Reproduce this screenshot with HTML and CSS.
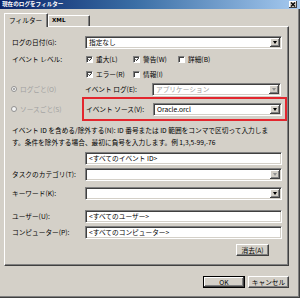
FILE: index.html
```html
<!DOCTYPE html>
<html lang="ja">
<head>
<meta charset="utf-8">
<link rel="stylesheet" href="styles.css">
</head>
<body>
<div class="win">
  <div class="titlebar">
    <span class="title">現在のログをフィルター</span>
    <span class="close"><svg width="6" height="5" viewBox="0 0 6 5"><path d="M1 0.5 L5 4.5 M5 0.5 L1 4.5" stroke="#000" stroke-width="1.2"/></svg></span>
  </div>
  <div class="tabs">
    <div class="tab active">フィルター</div>
    <div class="tab">XML</div>
  </div>
  <div class="panel">
    <div class="row r-date">
      <span class="lbl">ログの日付(G):</span>
      <div class="combo w197"><span class="val">指定なし</span><span class="arr"><i class="tri"></i></span></div>
    </div>
    <div class="row r-level">
      <span class="lbl lvl-lbl">イベント レベル:</span>
      <div class="checks">
        <span class="chk"><span class="box on"><svg width="5" height="5" viewBox="0 0 5 5"><path d="M0.5 2.3 L1.9 3.8 L4.6 0.8" stroke="#000" stroke-width="1.1" fill="none"/></svg></span>重大(L)</span>
        <span class="chk"><span class="box on"><svg width="5" height="5" viewBox="0 0 5 5"><path d="M0.5 2.3 L1.9 3.8 L4.6 0.8" stroke="#000" stroke-width="1.1" fill="none"/></svg></span>警告(W)</span>
        <span class="chk"><span class="box"></span>詳細(B)</span>
        <span class="chk"><span class="box on"><svg width="5" height="5" viewBox="0 0 5 5"><path d="M0.5 2.3 L1.9 3.8 L4.6 0.8" stroke="#000" stroke-width="1.1" fill="none"/></svg></span>エラー(R)</span>
        <span class="chk"><span class="box"></span>情報(I)</span>
      </div>
    </div>
    <div class="row r-log">
      <span class="radio-col"><span class="radio on"></span><span class="dis">ログごと(O)</span></span>
      <span class="lbl2">イベント ログ(E):</span>
      <div class="combo w129"><span class="val dis">アプリケーション</span><span class="arr"><i class="tri dim"></i></span></div>
    </div>
    <div class="row r-src">
      <span class="radio-col short"><span class="radio"></span><span class="dis">ソースごと(S)</span></span>
      <div class="hilite">
        <span class="lbl2">イベント ソース(V):</span>
        <div class="combo w129"><span class="val">Oracle.orcl</span><span class="arr"><i class="tri"></i></span></div>
      </div>
    </div>
    <p class="note">イベント ID を含める/除外する(N): ID 番号または ID 範囲をコンマで区切って入力しま<br>す。条件を除外する場合、最初に負号を入力します。例 1,3,5-99,-76</p>
    <div class="row r-id">
      <span class="lbl"></span>
      <div class="edit w197"><span class="val">&lt;すべてのイベント ID&gt;</span></div>
    </div>
    <div class="row r-task">
      <span class="lbl">タスクのカテゴリ(T):</span>
      <div class="combo w197"><span class="val"></span><span class="arr"><i class="tri dim"></i></span></div>
    </div>
    <div class="row r-kw">
      <span class="lbl">キーワード(K):</span>
      <div class="combo w197"><span class="val"></span><span class="arr"><i class="tri"></i></span></div>
    </div>
    <div class="row r-user">
      <span class="lbl">ユーザー(U):</span>
      <div class="edit w197"><span class="val">&lt;すべてのユーザー&gt;</span></div>
    </div>
    <div class="row r-comp">
      <span class="lbl">コンピューター(P):</span>
      <div class="edit w197"><span class="val">&lt;すべてのコンピューター&gt;</span></div>
    </div>
    <div class="row r-clear">
      <button class="btn clear">消去(A)</button>
    </div>
  </div>
  <div class="footer">
    <button class="btn ok">OK</button>
    <button class="btn cancel">キャンセル</button>
  </div>
</div>
</body>
</html>
```
FILE: styles.css
```css
* { box-sizing: border-box; margin: 0; padding: 0; }
html, body { width: 300px; height: 298px; overflow: hidden; }
body {
  background: #d4d0c8;
  font-family: "Noto Sans CJK JP", "Noto Sans", sans-serif;
  font-size: 6.7px;
  line-height: 1;
  color: #000;
}
.win {
  width: 300px;
  height: 298px;
  background: #d4d0c8;
  box-shadow: inset -1px -1px 0 #404040, inset -2px -2px 0 #808080;
  display: flex;
  flex-direction: column;
}
.titlebar {
  height: 9px;
  flex: none;
  background: linear-gradient(to right, #0a246a 0%, #3a6ea5 45%, #a6caf0 100%);
  display: flex;
  align-items: center;
  justify-content: space-between;
  padding: 0 3px 0 2px;
}
.title { color: #fff; font-weight: bold; font-size: 5.6px; white-space: nowrap; }
.close {
  width: 8px; height: 7px;
  background: #d4d0c8;
  box-shadow: inset -1px -1px 0 #404040, inset 1px 1px 0 #fff;
  display: flex; align-items: center; justify-content: center;
}
.close svg { display: block; }
.tabs {
  display: flex;
  align-items: flex-end;
  margin: 4px 0 0 4px;
  height: 13px;
  flex: none;
  position: relative;
  z-index: 1;
}
.tab {
  background: #d4d0c8;
  border-top: 1px solid #fff;
  border-left: 1px solid #fff;
  border-right: 1px solid #404040;
  box-shadow: inset -1px 0 0 #808080;
  border-radius: 1px 1px 0 0;
  display: flex;
  align-items: center;
  white-space: nowrap;
}
.tab.active {
  width: 44px;
  height: 14px;
  margin-bottom: -1px;
  padding-left: 4px;
  padding-bottom: 1px;
}
.tab:not(.active) {
  width: 42px;
  height: 11px;
  padding-left: 3px;
  font-weight: bold;
  font-family: "DejaVu Sans", sans-serif;
  font-size: 5.6px;
}
.panel {
  margin-left: 4px;
  width: 285px;
  height: 240px;
  flex: none;
  border: 1px solid;
  border-color: #fff #404040 #404040 #fff;
  box-shadow: inset -1px -1px 0 #808080;
  padding-left: 7px;
}
.row { display: flex; align-items: center; }
.lbl { width: 73px; flex: none; white-space: nowrap; }
.lbl2 { width: 67px; flex: none; white-space: nowrap; }
.dis { color: #a0a0a0; }

.combo, .edit {
  height: 13px;
  background: #fff;
  border: 1px solid;
  border-color: #808080 #fff #fff #808080;
  box-shadow: inset 1px 1px 0 #404040, inset -1px -1px 0 #d4d0c8;
  display: flex;
  align-items: center;
  padding: 2px 1px 2px 3px;
  flex: none;
}
.w197 { width: 197px; }
.w129 { width: 129px; }
.val { flex: 1; white-space: nowrap; }
.combo .val { padding-left: 0; }
.arr {
  width: 10px;
  height: 9px;
  flex: none;
  background: #d4d0c8;
  box-shadow: inset -1px -1px 0 #404040, inset 1px 1px 0 #fff, inset -2px -2px 0 #808080;
  display: flex; align-items: center; justify-content: center;
}
.tri {
  width: 0; height: 0;
  border-left: 2.5px solid transparent;
  border-right: 2.5px solid transparent;
  border-top: 3px solid #000;
}
.tri.dim { border-top-color: #909090; }

.r-date { margin-top: 9px; }
.r-level { margin-top: 3px; align-items: flex-start; }
.lvl-lbl { line-height: 15px; }
.checks {
  display: grid;
  grid-template-columns: 47px 45px auto;
  grid-auto-rows: 15px;
  margin-left: 1px;
}
.chk { display: flex; align-items: center; white-space: nowrap; }
.box {
  width: 7px; height: 7px;
  background: #fff;
  border: 1px solid;
  border-color: #808080 #fff #fff #808080;
  box-shadow: inset 1px 1px 0 #404040;
  margin-right: 3px;
  display: flex; align-items: center; justify-content: center;
}
.box svg { display: block; margin: 0 0 0 1px; }

.r-log { margin-top: 1px; height: 13px; }
.radio-col { width: 74px; flex: none; display: flex; align-items: center; white-space: nowrap; margin-left: -1px; }
.radio-col.short { width: 71px; }
.radio {
  width: 6px; height: 6px;
  border-radius: 50%;
  background: #f4f4f4;
  border: 1px solid #909090;
  margin-right: 3px;
  display: flex; align-items: center; justify-content: center;
}
.radio.on::after {
  content: "";
  width: 2px; height: 2px;
  border-radius: 50%;
  background: #909090;
}
.r-src { margin-top: 1px; }
.hilite {
  width: 205px;
  height: 24px;
  border: 2px solid #e3262e;
  padding: 0 3px 0 2px;
  display: flex;
  align-items: center;
}
.note { margin-top: 3px; line-height: 12px; white-space: nowrap; }
.r-id { margin-top: 4px; }
.r-task { margin-top: 3px; }
.r-kw { margin-top: 6px; }
.r-user { margin-top: 10px; }
.r-comp { margin-top: 3px; }
.r-clear { margin-top: 5px; justify-content: flex-end; padding-right: 19px; }

.btn {
  font: inherit;
  height: 12px;
  background: #d4d0c8;
  border: 1px solid;
  border-color: #fff #404040 #404040 #fff;
  box-shadow: inset -1px -1px 0 #808080;
  display: flex; align-items: center; justify-content: center;
  color: #000;
}
.clear { width: 33px; }
.footer {
  display: flex;
  justify-content: flex-end;
  gap: 3px;
  margin-top: 10px;
  padding-right: 11px;
}
.ok { width: 42px; border: 1px solid #000; box-shadow: inset -1px -1px 0 #404040, inset 1px 1px 0 #fff, inset -2px -2px 0 #808080; }
.cancel { width: 41px; }
```
